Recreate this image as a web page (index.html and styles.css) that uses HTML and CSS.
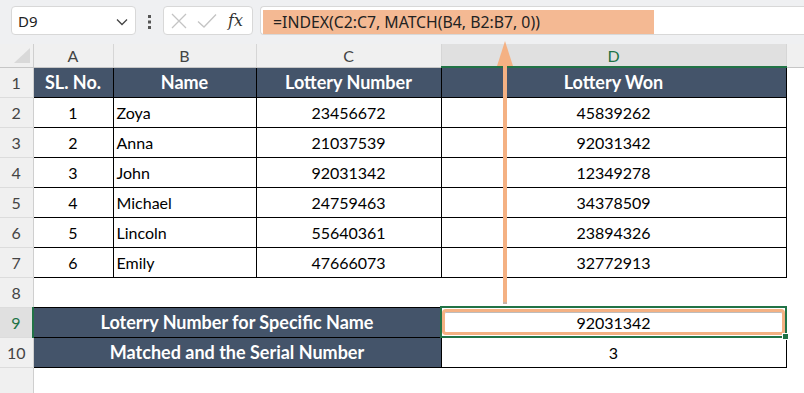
FILE: index.html
```html
<!DOCTYPE html>
<html>
<head>
<meta charset="utf-8">
<link rel="stylesheet" href="styles.css">
</head>
<body>
<div class="app">
  <div class="toolbar">
    <div class="namebox">
      <span class="nb-text">D9</span>
      <svg class="chev" width="12" height="8" viewBox="0 0 12 8"><path d="M1 1.5 L6 6.5 L11 1.5" fill="none" stroke="#444" stroke-width="1.3"/></svg>
    </div>
    <svg class="dots" width="4" height="14" viewBox="0 0 4 14"><rect x="0" y="0" width="3" height="3" fill="#555"/><rect x="0" y="5.5" width="3" height="3" fill="#555"/><rect x="0" y="11" width="3" height="3" fill="#555"/></svg>
    <div class="fxbox">
      <svg width="18" height="18" viewBox="0 0 18 18"><path d="M2 2 L16 16 M16 2 L2 16" stroke="#c4c4c4" stroke-width="1.3" fill="none"/></svg>
      <svg width="20" height="16" viewBox="0 0 20 16"><path d="M1 8.5 L7 14 L19 1.5" stroke="#c4c4c4" stroke-width="1.3" fill="none"/></svg>
      <span class="fx">fx</span>
    </div>
    <div class="formula"><span class="hl">=INDEX(C2:C7, MATCH(B4, B2:B7, 0))</span></div>
  </div>

  <table class="sheet">
    <colgroup>
      <col class="w-rh"><col class="w-a"><col class="w-b"><col class="w-c"><col class="w-d"><col class="w-e">
    </colgroup>
    <tr class="hdr">
      <th class="corner"><svg width="18" height="17" viewBox="0 0 18 17"><polygon points="17,1 17,16 1,16" fill="#d9d9d9"/></svg></th>
      <th class="ch">A</th><th class="ch">B</th><th class="ch">C</th><th class="ch sel-col">D</th><th class="ch ch-e"></th>
    </tr>
    <tr>
      <th class="rh">1</th>
      <td class="t th-dark">SL. No.</td><td class="t th-dark">Name</td><td class="t th-dark">Lottery Number</td><td class="t th-dark">Lottery Won</td><td class="e"></td>
    </tr>
    <tr><th class="rh">2</th><td class="t c">1</td><td class="t l">Zoya</td><td class="t c">23456672</td><td class="t c">45839262</td><td class="e"></td></tr>
    <tr><th class="rh">3</th><td class="t c">2</td><td class="t l">Anna</td><td class="t c">21037539</td><td class="t c">92031342</td><td class="e"></td></tr>
    <tr><th class="rh">4</th><td class="t c">3</td><td class="t l">John</td><td class="t c">92031342</td><td class="t c">12349278</td><td class="e"></td></tr>
    <tr><th class="rh">5</th><td class="t c">4</td><td class="t l">Michael</td><td class="t c">24759463</td><td class="t c">34378509</td><td class="e"></td></tr>
    <tr><th class="rh">6</th><td class="t c">5</td><td class="t l">Lincoln</td><td class="t c">55640361</td><td class="t c">23894326</td><td class="e"></td></tr>
    <tr><th class="rh">7</th><td class="t c">6</td><td class="t l">Emily</td><td class="t c">47666073</td><td class="t c">32772913</td><td class="e"></td></tr>
    <tr><th class="rh">8</th><td class="e"></td><td class="e"></td><td class="e"></td><td class="e"></td><td class="e"></td></tr>
    <tr>
      <th class="rh sel-row">9</th>
      <td class="t th-dark" colspan="3">Loterry Number for Specific Name</td>
      <td class="active"><div class="selbox">92031342</div><span class="handle"></span></td>
      <td class="e"></td>
    </tr>
    <tr>
      <th class="rh">10</th>
      <td class="t th-dark" colspan="3">Matched and the Serial Number</td>
      <td class="t c">3</td>
      <td class="e"></td>
    </tr>
    <tr class="tail"><th class="rh"></th><td class="e"></td><td class="e"></td><td class="e"></td><td class="e"></td><td class="e"></td></tr>
  </table>

  <svg class="arrow" width="20" height="266" viewBox="0 0 20 266">
    <rect x="8" y="20" width="4" height="244" fill="#f4b183"/>
    <rect x="8" y="262" width="4" height="2" fill="#c9b3a3"/>
    <polygon points="10,1 2,26 18,26" fill="#f4b183"/>
  </svg>
</div>
</body>
</html>
```

FILE: styles.css
```css
html, body {
  margin: 0;
  padding: 0;
  background: #ffffff;
}

.app {
  position: relative;
  width: 804px;
  height: 393px;
  overflow: hidden;
  font-family: Lato, "Noto Sans", sans-serif;
}

/* ---------- toolbar ---------- */
.toolbar {
  display: flex;
  align-items: flex-start;
  height: 44px;
  box-sizing: border-box;
  padding: 6px 0 0 11px;
  background: #eff0f2;
}

.namebox {
  width: 125px;
  height: 29px;
  box-sizing: border-box;
  background: #ffffff;
  border: 1px solid #d8d8d8;
  border-radius: 4px;
  display: flex;
  align-items: center;
  justify-content: space-between;
  padding: 0 7px 0 6px;
  font-family: "Noto Sans", sans-serif;
  font-size: 15px;
  color: #222;
}

.chev {
  margin-top: 2px;
}

.dots {
  margin: 9px 11px 0 12px;
}

.fxbox {
  width: 90px;
  height: 29px;
  box-sizing: border-box;
  background: #ffffff;
  border: 1px solid #d8d8d8;
  border-radius: 4px;
  display: flex;
  align-items: center;
  gap: 9px;
  padding-left: 6px;
}

.fx {
  font-family: "DejaVu Serif", "Liberation Serif", serif;
  font-style: italic;
  font-size: 16px;
  color: #333;
  margin-left: 2px;
}

.formula {
  flex: 1;
  height: 29px;
  margin-left: 7px;
  box-sizing: border-box;
  background: #ffffff;
  border: 1px solid #d8d8d8;
  border-right: none;
  border-radius: 4px 0 0 4px;
  padding: 3px 0 0 2px;
}

.hl {
  display: block;
  width: 391px;
  height: 24px;
  box-sizing: border-box;
  background: #f4b993;
  padding-left: 10px;
  line-height: 24px;
  font-family: "Noto Sans", sans-serif;
  font-size: 15.8px;
  color: #222;
  white-space: nowrap;
}

/* ---------- sheet ---------- */
.sheet {
  width: 804px;
  table-layout: fixed;
  border-collapse: collapse;
  border-spacing: 0;
}

.w-rh { width: 33px; }
.w-a { width: 80px; }
.w-b { width: 143px; }
.w-c { width: 185px; }
.w-d { width: 345px; }
.w-e { width: 18px; }

.sheet tr { height: 30px; }
.sheet tr.hdr { height: 23px; }
.sheet tr.tail { height: 28px; }

.sheet th, .sheet td {
  padding: 0;
  font-size: 16px;
  font-weight: normal;
}

.sheet .corner {
  background: #f0f0f0;
  border-right: 1px solid #cfcfcf;
  border-bottom: 1px solid #c6c6c6;
  text-align: right;
  vertical-align: bottom;
  line-height: 0;
}

.corner svg {
  margin: 0 2px 3px 0;
}

.sheet .ch {
  background: #f0f0f0;
  color: #444;
  font-size: 16px;
  border-right: 1px solid #d6d6d6;
  border-bottom: 1px solid #c6c6c6;
  text-align: center;
}

.sheet .ch.sel-col {
  background: #e0e0e0;
  color: #217346;
  border-bottom: 2px solid #217346;
}

.sheet .ch.ch-e {
  border-right: none;
}

.sheet .rh {
  background: #f0f0f0;
  color: #444;
  font-size: 16px;
  text-align: center;
  border-right: 1px solid #cfcfcf;
  border-bottom: 1px solid #dcdcdc;
}

.sheet .rh.sel-row {
  background: #e0e0e0;
  color: #217346;
  border-right: 2px solid #217346;
}

.sheet .t {
  border: 1px solid #000;
  color: #000;
}

.sheet .th-dark {
  background: #44546a;
  color: #ffffff;
  font-weight: bold;
  font-size: 18px;
  text-align: center;
}

.sheet .c { text-align: center; }
.sheet .l { text-align: left; padding-left: 3px; }

.sheet .e {
  background: #ffffff;
}

.sheet .active {
  position: relative;
  border: 2px solid #217346;
  padding: 0;
}

.selbox {
  height: 26px;
  box-sizing: border-box;
  border: 3px solid #f4b183;
  border-radius: 4px;
  box-shadow: inset 0 1px 0 #bdbdbd;
  text-align: center;
  line-height: 21px;
  color: #000;
}

.handle {
  position: absolute;
  right: -4px;
  bottom: -4px;
  width: 5px;
  height: 5px;
  background: #217346;
  border: 1px solid #ffffff;
}

.arrow {
  position: absolute;
  left: 495px;
  top: 40px;
}
```
